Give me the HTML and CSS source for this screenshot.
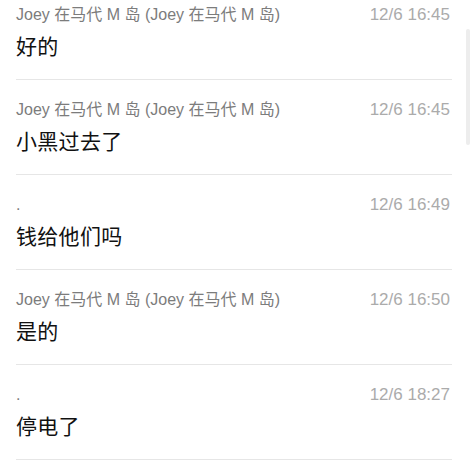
FILE: index.html
```html
<!DOCTYPE html>
<html lang="zh-CN">
<head>
    <meta charset="UTF-8">
    <meta name="viewport" content="width=device-width, initial-scale=1.0">
    <title>消息</title>
    <link rel="stylesheet" href="styles.css">
</head>
<body>
    <ul class="messages">
        <li class="message">
            <div class="meta">
                <span class="sender">Joey 在马代 M 岛 (Joey 在马代 M 岛)</span>
                <span class="time">12/6 16:45</span>
            </div>
            <p class="text">好的</p>
        </li>
        <li class="message">
            <div class="meta">
                <span class="sender">Joey 在马代 M 岛 (Joey 在马代 M 岛)</span>
                <span class="time">12/6 16:45</span>
            </div>
            <p class="text">小黑过去了</p>
        </li>
        <li class="message">
            <div class="meta">
                <span class="sender">.</span>
                <span class="time">12/6 16:49</span>
            </div>
            <p class="text">钱给他们吗</p>
        </li>
        <li class="message">
            <div class="meta">
                <span class="sender">Joey 在马代 M 岛 (Joey 在马代 M 岛)</span>
                <span class="time">12/6 16:50</span>
            </div>
            <p class="text">是的</p>
        </li>
        <li class="message">
            <div class="meta">
                <span class="sender">.</span>
                <span class="time">12/6 18:27</span>
            </div>
            <p class="text">停电了</p>
        </li>
    </ul>
    <div class="scrollbar"></div>
</body>
</html>
```

FILE: styles.css
```css
/* General */
body {
    font-family: "Liberation Sans", "Noto Sans CJK SC", sans-serif;
    background-color: #fff;
    color: #111;
    margin: 0;
    overflow: hidden;
}
/* Message list */
.messages {
    list-style: none;
    margin: -15px 22px 0 16px;
    padding: 0;
}
.message {
    padding: 20px 0 18px;
    border-bottom: 1px solid #e6e6e6;
}
.meta {
    display: flex;
    justify-content: space-between;
    align-items: center;
    height: 20px;
    line-height: 20px;
}
.sender {
    font-size: 16px;
    color: #7c7c7c;
}
.time {
    font-size: 17px;
    color: #ababab;
    padding-right: 2px;
}
.text {
    margin: 7px 0 0;
    font-size: 21px;
    line-height: 29px;
    letter-spacing: 0.3px;
    color: #111;
}
/* Scroll indicator */
.scrollbar {
    position: absolute;
    top: 29px;
    right: 4px;
    width: 4px;
    height: 116px;
    border-radius: 2px;
    background-color: #ededed;
}
```
